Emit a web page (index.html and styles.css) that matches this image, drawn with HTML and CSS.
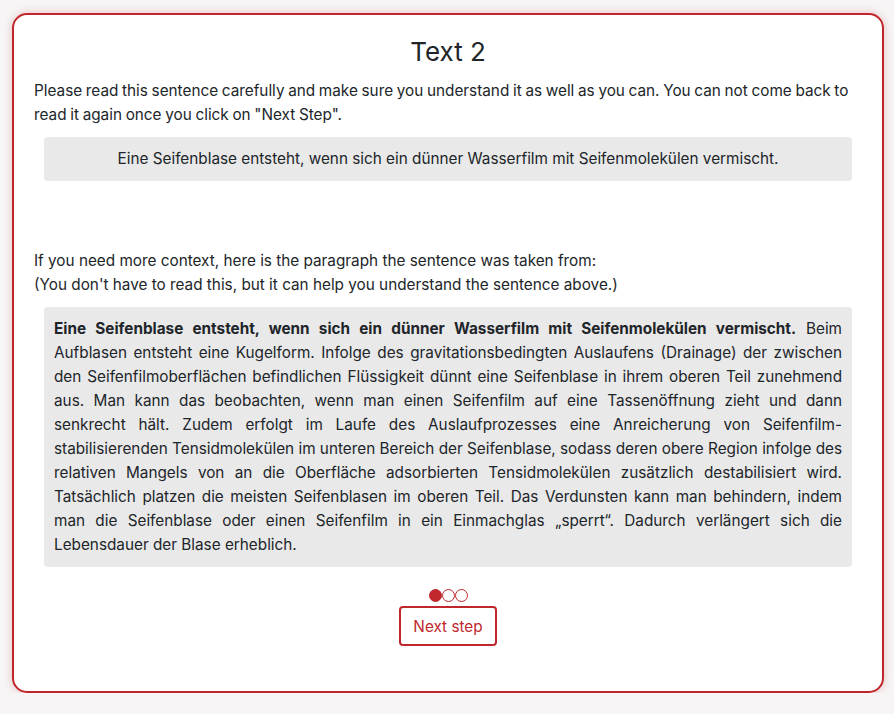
FILE: index.html
```html
<!DOCTYPE html>
<html>
<head>
<meta charset="utf-8">
<link rel="stylesheet" href="styles.css">
</head>
<body>
<div class="card">
  <h1 class="title">Text 2</h1>
  <p class="intro">Please read this sentence carefully and make sure you understand it as well as you can. You can not come back to read it again once you click on "Next Step".</p>
  <div class="sentence">Eine Seifenblase entsteht, wenn sich ein dünner Wasserfilm mit Seifenmolekülen vermischt.</div>
  <p class="context">If you need more context, here is the paragraph the sentence was taken from:<br>(You don't have to read this, but it can help you understand the sentence above.)</p>
  <div class="paragraph">
    <span class="line"><strong>Eine Seifenblase entsteht, wenn sich ein dünner Wasserfilm mit Seifenmolekülen vermischt.</strong> Beim</span>
    <span class="line">Aufblasen entsteht eine Kugelform. Infolge des gravitationsbedingten Auslaufens (Drainage) der zwischen</span>
    <span class="line">den Seifenfilmoberflächen befindlichen Flüssigkeit dünnt eine Seifenblase in ihrem oberen Teil zunehmend</span>
    <span class="line">aus. Man kann das beobachten, wenn man einen Seifenfilm auf eine Tassenöffnung zieht und dann</span>
    <span class="line">senkrecht hält. Zudem erfolgt im Laufe des Auslaufprozesses eine Anreicherung von Seifenfilm-</span>
    <span class="line">stabilisierenden Tensidmolekülen im unteren Bereich der Seifenblase, sodass deren obere Region infolge des</span>
    <span class="line">relativen Mangels von an die Oberfläche adsorbierten Tensidmolekülen zusätzlich destabilisiert wird.</span>
    <span class="line">Tatsächlich platzen die meisten Seifenblasen im oberen Teil. Das Verdunsten kann man behindern, indem</span>
    <span class="line">man die Seifenblase oder einen Seifenfilm in ein Einmachglas „sperrt“. Dadurch verlängert sich die</span>
    <span class="line last">Lebensdauer der Blase erheblich.</span>
  </div>
  <div class="footer">
    <div class="dots"><span class="dot filled"></span><span class="dot"></span><span class="dot"></span></div>
    <button class="next">Next step</button>
  </div>
</div>
</body>
</html>
```
FILE: styles.css
```css
html, body {
  margin: 0;
  padding: 0;
  background: #f7f5f5;
}
body {
  padding: 13px 11px 0 12px;
  font-family: Inter, "Noto Sans", sans-serif;
  color: #212529;
  font-size: 15.3px;
  line-height: 24px;
}
.card {
  box-sizing: border-box;
  width: 872px;
  height: 680px;
  background: #fff;
  border: 2px solid #c0272d;
  border-radius: 15px;
  box-shadow: 0 0 8px rgba(192, 39, 45, 0.25);
  padding: 21px 20px 0 20px;
}
.title {
  margin: 0 0 11px 0;
  text-align: center;
  font-size: 26px;
  font-weight: 400;
  line-height: 32px;
}
.intro {
  margin: 0 0 10px 0;
  word-spacing: -0.6px;
}
.sentence {
  margin: 0 10px;
  background: #e9e9e9;
  border-radius: 4px;
  padding: 10px;
  text-align: center;
}
.context {
  margin: 68px 0 10px 0;
}
.paragraph {
  margin: 0 10px;
  background: #e9e9e9;
  border-radius: 4px;
  padding: 10px;
}
.line {
  display: block;
  white-space: nowrap;
  text-align: justify;
  text-align-last: justify;
}
.line.last {
  text-align-last: left;
}
.paragraph strong {
  font-weight: 700;
}
.footer {
  display: flex;
  flex-direction: column;
  align-items: center;
  margin-top: 22px;
}
.dots {
  display: flex;
  height: 14px;
}
.dot {
  box-sizing: border-box;
  width: 13px;
  height: 13px;
  border-radius: 50%;
  border: 1px solid #c0272d;
}
.dot.filled {
  background: #c0272d;
}
.next {
  margin-top: 3px;
  font-family: Inter, "Noto Sans", sans-serif;
  font-size: 15.3px;
  color: #c0272d;
  background: #fff;
  border: 2px solid #c0272d;
  border-radius: 4px;
  padding: 0 12px;
  height: 40px;
  width: 98px;
}
```
